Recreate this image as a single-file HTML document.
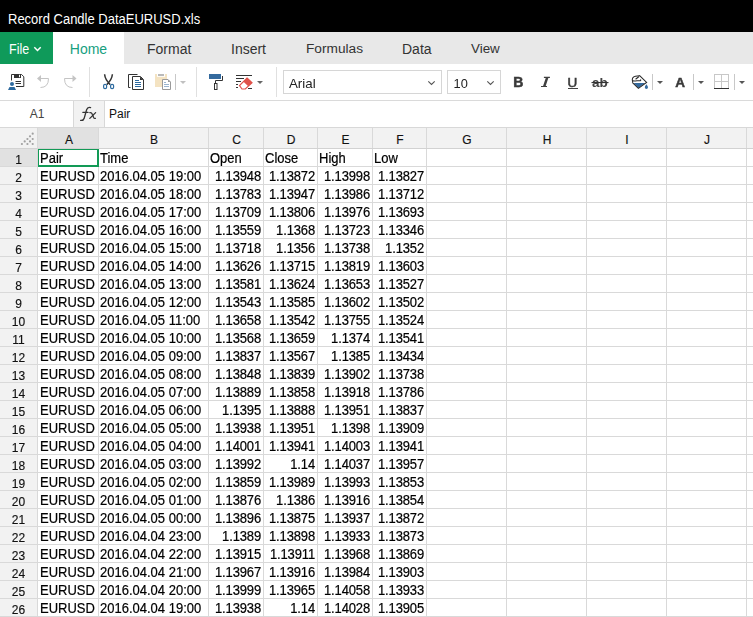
<!DOCTYPE html>
<html><head><meta charset="utf-8">
<style>
*{box-sizing:border-box}
html,body{margin:0;padding:0;width:753px;height:617px;overflow:hidden;background:#fff;font-family:"Liberation Sans",sans-serif}
.abs{position:absolute}
#title{position:absolute;left:0;top:0;width:753px;height:32px;background:#000}
#title span{position:absolute;left:8px;top:11px;color:#fff;font-size:13px;line-height:15px;white-space:nowrap;transform:scaleY(1.1);transform-origin:0 0}
#tabs{position:absolute;left:0;top:32px;width:753px;height:32px;background:#e8e8e8}
.tab{position:absolute;top:0;height:32px;line-height:34px;font-size:14px;color:#333}
#file{left:0;width:53px;background:#0f9a5a;color:#fff;padding-left:9px;font-size:12.5px}
#file span{display:inline-block;transform:scaleY(1.1);transform-origin:0 12px}
#home{left:53px;width:71px;background:#fff;color:#17a07f;text-align:center}
#toolbar{position:absolute;left:0;top:64px;width:753px;height:37px;background:#fff;border-bottom:1px solid #dadada}
#fbar{position:absolute;left:0;top:101px;width:753px;height:27px;background:#fff;border-bottom:1px solid #d8d8d8}
#namebox{position:absolute;left:0;top:0;width:73px;height:26px;line-height:27px;text-align:center;font-size:12px;color:#444;padding-left:1px}
#fx{position:absolute;left:73px;top:0;width:32px;height:26px;background:#f2f2f2;border-left:1px solid #d8d8d8;border-right:1px solid #d8d8d8}
#ftext{position:absolute;left:109px;top:0;line-height:27px;font-size:12px;color:#111}
#grid{position:absolute;left:0;top:0;width:753px;height:617px}
.corner{position:absolute;left:0;top:128px;width:37px;height:20px;background:#f2f2f2}
.ch{position:absolute;top:128px;height:20px;line-height:25px;padding-left:2px;background:#f2f2f2;text-align:center;font-size:12px;color:#111;-webkit-text-stroke:0.15px #111}
.ch.sel{background:#e1e1e1}
.rh{position:absolute;left:0;width:37px;height:18px;line-height:25px;background:#f2f2f2;text-align:center;font-size:12px;color:#111;-webkit-text-stroke:0.15px #111}
.rh.sel{background:#e1e1e1}
.vl{position:absolute;top:128px;width:1px;height:490px;background:#d9d9d9}
.hl{position:absolute;left:0;width:753px;height:1px;background:#d9d9d9}
.c{position:absolute;height:18px;font-size:13px;color:#000;padding:0 2px 0 2px;white-space:nowrap;overflow:hidden}
.c span{display:inline-block;line-height:15px;margin-top:2px;transform:scaleY(1.11);transform-origin:0 0;-webkit-text-stroke:0.2px #000}
.c.r{text-align:right}
#selbox{position:absolute;left:38px;top:149px;width:61px;height:18px;border-style:solid;border-color:#129a56;border-width:1px 2px 2px 1px}
.c.r span{letter-spacing:-0.14px}

</style></head><body>
<div id="title"><span>Record Candle DataEURUSD.xls</span></div>
<div id="tabs">
<div class="tab" id="file"><span>File</span><svg width="9" height="6" style="position:absolute;left:33px;top:13.5px" viewBox="0 0 9 6"><path d="M1.3 1.3 L4.5 4.5 L7.7 1.3" fill="none" stroke="#fff" stroke-width="1.5"/></svg></div>
<div class="tab" id="home">Home</div>
<div class="tab" style="left:147px">Format</div>
<div class="tab" style="left:231px">Insert</div>
<div class="tab" style="left:306px;font-size:13.7px">Formulas</div>
<div class="tab" style="left:402px">Data</div>
<div class="tab" style="left:471px;font-size:13.4px">View</div>
</div>
<div id="toolbar"></div>
<div id="fbar">
<div id="namebox">A1</div>
<div id="fx"></div>
<div id="ftext">Pair</div>
</div>
<svg class="abs" style="left:0;top:0;will-change:transform" width="753" height="128" viewBox="0 0 753 128">
<!-- separators -->
<rect x="89" y="67" width="1" height="30" fill="#e0e0e0"/>
<rect x="196" y="67" width="1" height="30" fill="#e0e0e0"/>
<rect x="276" y="67" width="1" height="30" fill="#e0e0e0"/>
<!-- save -->
<g fill="none" stroke="#333" stroke-width="1">
<path d="M11.5 80.5 V74.5 H21.6 L23.8 76.8 V86.5 H16"/>
<path d="M15.5 81.5 H21 M15.5 83.5 H21"/>
</g>
<rect x="14" y="74" width="7" height="4" fill="#333"/>
<rect x="19" y="74.8" width="1" height="2.4" fill="#fff"/>
<circle cx="12" cy="84" r="2" fill="#2d6a9f"/>
<path d="M9.5 87 H14.5 L16 90 H8 Z" fill="#2d6a9f"/>
<!-- undo/redo -->
<g fill="none" stroke="#c4c4c4" stroke-width="1">
<path d="M40 78.5 H48.5 Q48.5 87.5 40.5 87.5"/>
<path d="M73 78.5 H64.5 Q64.5 87.5 72.5 87.5"/>
</g>
<path d="M37 78.5 L41 75 V82 Z" fill="#c4c4c4"/>
<path d="M76.5 78.5 L72.5 75 V82 Z" fill="#c4c4c4"/>
<!-- cut -->
<path d="M104.6 74.3 Q105 79.5 110.2 84.6 M112.4 74.3 Q112 79.5 106.8 84.6" fill="none" stroke="#333" stroke-width="1.5"/>
<rect x="103.6" y="84.4" width="3" height="4.2" rx="1.4" fill="none" stroke="#2d6a9f" stroke-width="1.2"/>
<rect x="110.6" y="84.4" width="3" height="4.2" rx="1.4" fill="none" stroke="#2d6a9f" stroke-width="1.2"/>
<!-- copy -->
<g fill="none" stroke="#333" stroke-width="1">
<path d="M137.5 74.5 H128.5 V87.5 H130.5"/>
<path d="M132.5 76.5 H140.5 L143.5 79.5 V89.5 H132.5 Z"/>
</g>
<path d="M140 76.5 L143.5 80 H140 Z" fill="#333"/>
<g stroke="#2d6a9f" stroke-width="1">
<path d="M135 80.5 H139 M135 82.5 H141 M135 84.5 H141 M135 86.5 H141"/>
</g>
<!-- paste (disabled) -->
<rect x="155" y="74" width="12" height="13" fill="#f4e3c2"/>
<rect x="157" y="74" width="8" height="2.8" fill="#fff"/>
<rect x="158" y="74.2" width="6" height="1.6" fill="#aaa"/>
<path d="M162.5 79.5 H168 L170.5 82 V89.5 H162.5 Z" fill="#fff" stroke="#9a9a9a" stroke-width="1"/>
<path d="M168 79.5 L170.5 82 H168 Z" fill="#9a9a9a"/>
<path d="M164 82.5 H166 M164 84.5 H169 M164 86.5 H169" stroke="#9bb5cf" stroke-width="1"/>
<rect x="175" y="74" width="1" height="16" fill="#c8c8c8"/>
<path d="M180 81 H186 L183 84 Z" fill="#c0c0c0"/>
<!-- format painter -->
<rect x="209" y="74" width="12" height="5" fill="#346a9e"/>
<path d="M222.5 76 V80.5 H215.5 V83" fill="none" stroke="#333" stroke-width="1"/>
<rect x="214.5" y="83.5" width="2.5" height="6" fill="none" stroke="#333" stroke-width="1"/>
<!-- clear formatting -->
<g stroke="#333" stroke-width="1">
<path d="M236 75.5 H252 M236 78.5 H244 M236 81.5 H241 M236 84.5 H238 M236 87.5 H238 M248 88.5 H252"/>
</g>
<path d="M247 78 L252 82.8 L245.3 89 H242 L239.5 85.5 Z" fill="#fff" stroke="#e0524a" stroke-width="1.2"/>
<path d="M247 78 L252 82.8 L248.3 86.2 L243.2 81.5 Z" fill="#e0524a"/>
<path d="M257 81 H263 L260 84 Z" fill="#666"/>
<!-- font box -->
<rect x="283.5" y="70.5" width="158" height="23" fill="#fff" stroke="#d6d6d6" stroke-width="1"/>
<text x="289" y="88" font-family="Liberation Sans" font-size="13.3" fill="#222">Arial</text>
<path d="M428.3 81.3 L431.5 84.5 L434.7 81.3" fill="none" stroke="#555" stroke-width="1.1"/>
<rect x="447.5" y="70.5" width="53" height="23" fill="#fff" stroke="#d6d6d6" stroke-width="1"/>
<text x="453.6" y="88.4" font-family="Liberation Sans" font-size="12.8" fill="#222">10</text>
<path d="M487.3 81.3 L490.5 84.5 L493.7 81.3" fill="none" stroke="#555" stroke-width="1.1"/>
<!-- B I U ab -->
<text x="513.2" y="87" font-family="Liberation Sans" font-weight="bold" font-size="14" fill="#3a3a3a" stroke="#3a3a3a" stroke-width="0.5">B</text>
<path d="M543.9 76.8 H549.9 V77.9 H543.9 Z M541 86 H547 V87.1 H541 Z M545.9 77.5 L548.5 77.5 L545.5 86.5 L542.9 86.5 Z" fill="#404040"/>
<text x="567.6" y="87" font-family="Liberation Sans" font-size="13.5" fill="#3a3a3a" stroke="#3a3a3a" stroke-width="0.6">U</text>
<rect x="568" y="88" width="10" height="1" fill="#404040"/>
<text x="592" y="87" font-family="Liberation Sans" font-weight="bold" font-size="13.5" fill="#444">ab</text>
<rect x="591.5" y="82" width="17" height="1.1" fill="#333"/>
<!-- fill color -->
<path d="M633.6 82.9 H645.2 L638.4 88 Z" fill="#346a9e"/>
<path d="M639.35 75.3 L646.6 82.4 L638.4 88.4 L632.2 82.4" fill="none" stroke="#2a2a2a" stroke-width="1.1" stroke-linejoin="miter"/>
<g fill="none" stroke="#2a2a2a" stroke-width="1.1" stroke-linecap="round">
<path d="M632.6 81.6 Q631.3 77.2 635.5 76.2 L639.3 75.8"/>
<path d="M635.9 79 L638.7 76.8"/>
<path d="M633.4 80.9 Q634.5 81.1 637 80.8 L640.3 80.8 Q640.9 80.6 640.7 79.8"/>
</g>
<path d="M646.4 84.2 Q648 86.3 648 87.3 A1.6 1.6 0 0 1 644.8 87.3 Q644.8 86.3 646.4 84.2 Z" fill="#346a9e"/>
<rect x="652" y="74" width="1" height="16" fill="#c8c8c8"/>
<path d="M657 81 H663 L660 84 Z" fill="#555"/>
<!-- font color A -->
<text x="675.2" y="87" font-family="Liberation Sans" font-weight="bold" font-size="13.5" fill="#3a3a3a" stroke="#3a3a3a" stroke-width="0.5">A</text>
<rect x="693" y="74" width="1" height="16" fill="#c8c8c8"/>
<path d="M698 81 H704 L701 84 Z" fill="#555"/>
<!-- borders -->
<g fill="none" stroke="#c8c8c8" stroke-width="1">
<rect x="714.5" y="74.5" width="14" height="14"/>
<path d="M721.5 74.5 V88.5 M714.5 81.5 H728.5"/>
</g>
<rect x="714" y="88" width="15" height="1" fill="#333"/>
<rect x="734" y="74" width="1" height="16" fill="#c8c8c8"/>
<path d="M739 81 H745 L742 84 Z" fill="#555"/>
<!-- fx -->
<g fill="none" stroke="#333" stroke-width="1.3" stroke-linecap="round">
<path d="M90.6 107.6 Q87.6 106.8 86.6 109.8 L84.2 118.2 Q83.4 120.8 80.6 120.4"/>
<path d="M82.9 112.4 H88"/>
<path d="M89.9 112.6 Q91.6 112.3 92.3 114.2 L93.6 117.4 Q94.2 118.7 95.4 118.3"/>
<path d="M95.6 112.6 L89.8 118.4"/>
</g>
</svg>

<div id="grid">
<div class="corner"></div>
<svg class="abs" width="38" height="21" style="left:0;top:127px" viewBox="0 127 38 21"><circle cx="32.7" cy="133.7" r="1.1" fill="#a0a0a0"/><circle cx="30" cy="136.3" r="1.1" fill="#a0a0a0"/><circle cx="27.4" cy="139" r="1.1" fill="#a0a0a0"/><circle cx="32.7" cy="139" r="1.1" fill="#a0a0a0"/><circle cx="24.7" cy="141.4" r="1.1" fill="#a0a0a0"/><circle cx="30" cy="141.4" r="1.1" fill="#a0a0a0"/><circle cx="21.9" cy="144" r="1.1" fill="#a0a0a0"/><circle cx="27.4" cy="144" r="1.1" fill="#a0a0a0"/><circle cx="32.7" cy="144" r="1.1" fill="#a0a0a0"/></svg>
<div class="ch sel" style="left:38px;width:60px">A</div>
<div class="ch" style="left:98px;width:110px">B</div>
<div class="ch" style="left:208px;width:55px">C</div>
<div class="ch" style="left:263px;width:54px">D</div>
<div class="ch" style="left:317px;width:55px">E</div>
<div class="ch" style="left:372px;width:54px">F</div>
<div class="ch" style="left:426px;width:80px">G</div>
<div class="ch" style="left:506px;width:80px">H</div>
<div class="ch" style="left:586px;width:80px">I</div>
<div class="ch" style="left:666px;width:80px">J</div>
<div class="ch" style="left:746px;width:80px">K</div>
<div class="rh sel" style="top:148px">1</div>
<div class="rh" style="top:166px">2</div>
<div class="rh" style="top:184px">3</div>
<div class="rh" style="top:202px">4</div>
<div class="rh" style="top:220px">5</div>
<div class="rh" style="top:238px">6</div>
<div class="rh" style="top:256px">7</div>
<div class="rh" style="top:274px">8</div>
<div class="rh" style="top:292px">9</div>
<div class="rh" style="top:310px">10</div>
<div class="rh" style="top:328px">11</div>
<div class="rh" style="top:346px">12</div>
<div class="rh" style="top:364px">13</div>
<div class="rh" style="top:382px">14</div>
<div class="rh" style="top:400px">15</div>
<div class="rh" style="top:418px">16</div>
<div class="rh" style="top:436px">17</div>
<div class="rh" style="top:454px">18</div>
<div class="rh" style="top:472px">19</div>
<div class="rh" style="top:490px">20</div>
<div class="rh" style="top:508px">21</div>
<div class="rh" style="top:526px">22</div>
<div class="rh" style="top:544px">23</div>
<div class="rh" style="top:562px">24</div>
<div class="rh" style="top:580px">25</div>
<div class="rh" style="top:598px">26</div>
<div class="vl" style="left:98px"></div>
<div class="vl" style="left:208px"></div>
<div class="vl" style="left:263px"></div>
<div class="vl" style="left:317px"></div>
<div class="vl" style="left:372px"></div>
<div class="vl" style="left:426px"></div>
<div class="vl" style="left:506px"></div>
<div class="vl" style="left:586px"></div>
<div class="vl" style="left:666px"></div>
<div class="vl" style="left:746px"></div>
<div class="vl" style="left:826px"></div>
<div class="hl" style="top:148px;background:#d2d2d2"></div>
<div class="hl" style="top:166px"></div>
<div class="hl" style="top:184px"></div>
<div class="hl" style="top:202px"></div>
<div class="hl" style="top:220px"></div>
<div class="hl" style="top:238px"></div>
<div class="hl" style="top:256px"></div>
<div class="hl" style="top:274px"></div>
<div class="hl" style="top:292px"></div>
<div class="hl" style="top:310px"></div>
<div class="hl" style="top:328px"></div>
<div class="hl" style="top:346px"></div>
<div class="hl" style="top:364px"></div>
<div class="hl" style="top:382px"></div>
<div class="hl" style="top:400px"></div>
<div class="hl" style="top:418px"></div>
<div class="hl" style="top:436px"></div>
<div class="hl" style="top:454px"></div>
<div class="hl" style="top:472px"></div>
<div class="hl" style="top:490px"></div>
<div class="hl" style="top:508px"></div>
<div class="hl" style="top:526px"></div>
<div class="hl" style="top:544px"></div>
<div class="hl" style="top:562px"></div>
<div class="hl" style="top:580px"></div>
<div class="hl" style="top:598px"></div>
<div class="hl" style="top:616px"></div>
<div class="vl" style="left:37px"></div>
<div class="c" style="top:148px;left:38px;width:60px"><span>Pair</span></div>
<div class="c" style="top:148px;left:98px;width:110px"><span>Time</span></div>
<div class="c" style="top:148px;left:208px;width:55px"><span>Open</span></div>
<div class="c" style="top:148px;left:263px;width:54px"><span>Close</span></div>
<div class="c" style="top:148px;left:317px;width:55px"><span>High</span></div>
<div class="c" style="top:148px;left:372px;width:54px"><span>Low</span></div>
<div class="c" style="top:166px;left:38px;width:60px"><span>EURUSD</span></div>
<div class="c" style="top:166px;left:98px;width:110px"><span>2016.04.05 19:00</span></div>
<div class="c r" style="top:166px;left:208px;width:55px"><span>1.13948</span></div>
<div class="c r" style="top:166px;left:263px;width:54px"><span>1.13872</span></div>
<div class="c r" style="top:166px;left:317px;width:55px"><span>1.13998</span></div>
<div class="c r" style="top:166px;left:372px;width:54px"><span>1.13827</span></div>
<div class="c" style="top:184px;left:38px;width:60px"><span>EURUSD</span></div>
<div class="c" style="top:184px;left:98px;width:110px"><span>2016.04.05 18:00</span></div>
<div class="c r" style="top:184px;left:208px;width:55px"><span>1.13783</span></div>
<div class="c r" style="top:184px;left:263px;width:54px"><span>1.13947</span></div>
<div class="c r" style="top:184px;left:317px;width:55px"><span>1.13986</span></div>
<div class="c r" style="top:184px;left:372px;width:54px"><span>1.13712</span></div>
<div class="c" style="top:202px;left:38px;width:60px"><span>EURUSD</span></div>
<div class="c" style="top:202px;left:98px;width:110px"><span>2016.04.05 17:00</span></div>
<div class="c r" style="top:202px;left:208px;width:55px"><span>1.13709</span></div>
<div class="c r" style="top:202px;left:263px;width:54px"><span>1.13806</span></div>
<div class="c r" style="top:202px;left:317px;width:55px"><span>1.13976</span></div>
<div class="c r" style="top:202px;left:372px;width:54px"><span>1.13693</span></div>
<div class="c" style="top:220px;left:38px;width:60px"><span>EURUSD</span></div>
<div class="c" style="top:220px;left:98px;width:110px"><span>2016.04.05 16:00</span></div>
<div class="c r" style="top:220px;left:208px;width:55px"><span>1.13559</span></div>
<div class="c r" style="top:220px;left:263px;width:54px"><span>1.1368</span></div>
<div class="c r" style="top:220px;left:317px;width:55px"><span>1.13723</span></div>
<div class="c r" style="top:220px;left:372px;width:54px"><span>1.13346</span></div>
<div class="c" style="top:238px;left:38px;width:60px"><span>EURUSD</span></div>
<div class="c" style="top:238px;left:98px;width:110px"><span>2016.04.05 15:00</span></div>
<div class="c r" style="top:238px;left:208px;width:55px"><span>1.13718</span></div>
<div class="c r" style="top:238px;left:263px;width:54px"><span>1.1356</span></div>
<div class="c r" style="top:238px;left:317px;width:55px"><span>1.13738</span></div>
<div class="c r" style="top:238px;left:372px;width:54px"><span>1.1352</span></div>
<div class="c" style="top:256px;left:38px;width:60px"><span>EURUSD</span></div>
<div class="c" style="top:256px;left:98px;width:110px"><span>2016.04.05 14:00</span></div>
<div class="c r" style="top:256px;left:208px;width:55px"><span>1.13626</span></div>
<div class="c r" style="top:256px;left:263px;width:54px"><span>1.13715</span></div>
<div class="c r" style="top:256px;left:317px;width:55px"><span>1.13819</span></div>
<div class="c r" style="top:256px;left:372px;width:54px"><span>1.13603</span></div>
<div class="c" style="top:274px;left:38px;width:60px"><span>EURUSD</span></div>
<div class="c" style="top:274px;left:98px;width:110px"><span>2016.04.05 13:00</span></div>
<div class="c r" style="top:274px;left:208px;width:55px"><span>1.13581</span></div>
<div class="c r" style="top:274px;left:263px;width:54px"><span>1.13624</span></div>
<div class="c r" style="top:274px;left:317px;width:55px"><span>1.13653</span></div>
<div class="c r" style="top:274px;left:372px;width:54px"><span>1.13527</span></div>
<div class="c" style="top:292px;left:38px;width:60px"><span>EURUSD</span></div>
<div class="c" style="top:292px;left:98px;width:110px"><span>2016.04.05 12:00</span></div>
<div class="c r" style="top:292px;left:208px;width:55px"><span>1.13543</span></div>
<div class="c r" style="top:292px;left:263px;width:54px"><span>1.13585</span></div>
<div class="c r" style="top:292px;left:317px;width:55px"><span>1.13602</span></div>
<div class="c r" style="top:292px;left:372px;width:54px"><span>1.13502</span></div>
<div class="c" style="top:310px;left:38px;width:60px"><span>EURUSD</span></div>
<div class="c" style="top:310px;left:98px;width:110px"><span>2016.04.05 11:00</span></div>
<div class="c r" style="top:310px;left:208px;width:55px"><span>1.13658</span></div>
<div class="c r" style="top:310px;left:263px;width:54px"><span>1.13542</span></div>
<div class="c r" style="top:310px;left:317px;width:55px"><span>1.13755</span></div>
<div class="c r" style="top:310px;left:372px;width:54px"><span>1.13524</span></div>
<div class="c" style="top:328px;left:38px;width:60px"><span>EURUSD</span></div>
<div class="c" style="top:328px;left:98px;width:110px"><span>2016.04.05 10:00</span></div>
<div class="c r" style="top:328px;left:208px;width:55px"><span>1.13568</span></div>
<div class="c r" style="top:328px;left:263px;width:54px"><span>1.13659</span></div>
<div class="c r" style="top:328px;left:317px;width:55px"><span>1.1374</span></div>
<div class="c r" style="top:328px;left:372px;width:54px"><span>1.13541</span></div>
<div class="c" style="top:346px;left:38px;width:60px"><span>EURUSD</span></div>
<div class="c" style="top:346px;left:98px;width:110px"><span>2016.04.05 09:00</span></div>
<div class="c r" style="top:346px;left:208px;width:55px"><span>1.13837</span></div>
<div class="c r" style="top:346px;left:263px;width:54px"><span>1.13567</span></div>
<div class="c r" style="top:346px;left:317px;width:55px"><span>1.1385</span></div>
<div class="c r" style="top:346px;left:372px;width:54px"><span>1.13434</span></div>
<div class="c" style="top:364px;left:38px;width:60px"><span>EURUSD</span></div>
<div class="c" style="top:364px;left:98px;width:110px"><span>2016.04.05 08:00</span></div>
<div class="c r" style="top:364px;left:208px;width:55px"><span>1.13848</span></div>
<div class="c r" style="top:364px;left:263px;width:54px"><span>1.13839</span></div>
<div class="c r" style="top:364px;left:317px;width:55px"><span>1.13902</span></div>
<div class="c r" style="top:364px;left:372px;width:54px"><span>1.13738</span></div>
<div class="c" style="top:382px;left:38px;width:60px"><span>EURUSD</span></div>
<div class="c" style="top:382px;left:98px;width:110px"><span>2016.04.05 07:00</span></div>
<div class="c r" style="top:382px;left:208px;width:55px"><span>1.13889</span></div>
<div class="c r" style="top:382px;left:263px;width:54px"><span>1.13858</span></div>
<div class="c r" style="top:382px;left:317px;width:55px"><span>1.13918</span></div>
<div class="c r" style="top:382px;left:372px;width:54px"><span>1.13786</span></div>
<div class="c" style="top:400px;left:38px;width:60px"><span>EURUSD</span></div>
<div class="c" style="top:400px;left:98px;width:110px"><span>2016.04.05 06:00</span></div>
<div class="c r" style="top:400px;left:208px;width:55px"><span>1.1395</span></div>
<div class="c r" style="top:400px;left:263px;width:54px"><span>1.13888</span></div>
<div class="c r" style="top:400px;left:317px;width:55px"><span>1.13951</span></div>
<div class="c r" style="top:400px;left:372px;width:54px"><span>1.13837</span></div>
<div class="c" style="top:418px;left:38px;width:60px"><span>EURUSD</span></div>
<div class="c" style="top:418px;left:98px;width:110px"><span>2016.04.05 05:00</span></div>
<div class="c r" style="top:418px;left:208px;width:55px"><span>1.13938</span></div>
<div class="c r" style="top:418px;left:263px;width:54px"><span>1.13951</span></div>
<div class="c r" style="top:418px;left:317px;width:55px"><span>1.1398</span></div>
<div class="c r" style="top:418px;left:372px;width:54px"><span>1.13909</span></div>
<div class="c" style="top:436px;left:38px;width:60px"><span>EURUSD</span></div>
<div class="c" style="top:436px;left:98px;width:110px"><span>2016.04.05 04:00</span></div>
<div class="c r" style="top:436px;left:208px;width:55px"><span>1.14001</span></div>
<div class="c r" style="top:436px;left:263px;width:54px"><span>1.13941</span></div>
<div class="c r" style="top:436px;left:317px;width:55px"><span>1.14003</span></div>
<div class="c r" style="top:436px;left:372px;width:54px"><span>1.13941</span></div>
<div class="c" style="top:454px;left:38px;width:60px"><span>EURUSD</span></div>
<div class="c" style="top:454px;left:98px;width:110px"><span>2016.04.05 03:00</span></div>
<div class="c r" style="top:454px;left:208px;width:55px"><span>1.13992</span></div>
<div class="c r" style="top:454px;left:263px;width:54px"><span>1.14</span></div>
<div class="c r" style="top:454px;left:317px;width:55px"><span>1.14037</span></div>
<div class="c r" style="top:454px;left:372px;width:54px"><span>1.13957</span></div>
<div class="c" style="top:472px;left:38px;width:60px"><span>EURUSD</span></div>
<div class="c" style="top:472px;left:98px;width:110px"><span>2016.04.05 02:00</span></div>
<div class="c r" style="top:472px;left:208px;width:55px"><span>1.13859</span></div>
<div class="c r" style="top:472px;left:263px;width:54px"><span>1.13989</span></div>
<div class="c r" style="top:472px;left:317px;width:55px"><span>1.13993</span></div>
<div class="c r" style="top:472px;left:372px;width:54px"><span>1.13853</span></div>
<div class="c" style="top:490px;left:38px;width:60px"><span>EURUSD</span></div>
<div class="c" style="top:490px;left:98px;width:110px"><span>2016.04.05 01:00</span></div>
<div class="c r" style="top:490px;left:208px;width:55px"><span>1.13876</span></div>
<div class="c r" style="top:490px;left:263px;width:54px"><span>1.1386</span></div>
<div class="c r" style="top:490px;left:317px;width:55px"><span>1.13916</span></div>
<div class="c r" style="top:490px;left:372px;width:54px"><span>1.13854</span></div>
<div class="c" style="top:508px;left:38px;width:60px"><span>EURUSD</span></div>
<div class="c" style="top:508px;left:98px;width:110px"><span>2016.04.05 00:00</span></div>
<div class="c r" style="top:508px;left:208px;width:55px"><span>1.13896</span></div>
<div class="c r" style="top:508px;left:263px;width:54px"><span>1.13875</span></div>
<div class="c r" style="top:508px;left:317px;width:55px"><span>1.13937</span></div>
<div class="c r" style="top:508px;left:372px;width:54px"><span>1.13872</span></div>
<div class="c" style="top:526px;left:38px;width:60px"><span>EURUSD</span></div>
<div class="c" style="top:526px;left:98px;width:110px"><span>2016.04.04 23:00</span></div>
<div class="c r" style="top:526px;left:208px;width:55px"><span>1.1389</span></div>
<div class="c r" style="top:526px;left:263px;width:54px"><span>1.13898</span></div>
<div class="c r" style="top:526px;left:317px;width:55px"><span>1.13933</span></div>
<div class="c r" style="top:526px;left:372px;width:54px"><span>1.13873</span></div>
<div class="c" style="top:544px;left:38px;width:60px"><span>EURUSD</span></div>
<div class="c" style="top:544px;left:98px;width:110px"><span>2016.04.04 22:00</span></div>
<div class="c r" style="top:544px;left:208px;width:55px"><span>1.13915</span></div>
<div class="c r" style="top:544px;left:263px;width:54px"><span>1.13911</span></div>
<div class="c r" style="top:544px;left:317px;width:55px"><span>1.13968</span></div>
<div class="c r" style="top:544px;left:372px;width:54px"><span>1.13869</span></div>
<div class="c" style="top:562px;left:38px;width:60px"><span>EURUSD</span></div>
<div class="c" style="top:562px;left:98px;width:110px"><span>2016.04.04 21:00</span></div>
<div class="c r" style="top:562px;left:208px;width:55px"><span>1.13967</span></div>
<div class="c r" style="top:562px;left:263px;width:54px"><span>1.13916</span></div>
<div class="c r" style="top:562px;left:317px;width:55px"><span>1.13984</span></div>
<div class="c r" style="top:562px;left:372px;width:54px"><span>1.13903</span></div>
<div class="c" style="top:580px;left:38px;width:60px"><span>EURUSD</span></div>
<div class="c" style="top:580px;left:98px;width:110px"><span>2016.04.04 20:00</span></div>
<div class="c r" style="top:580px;left:208px;width:55px"><span>1.13999</span></div>
<div class="c r" style="top:580px;left:263px;width:54px"><span>1.13965</span></div>
<div class="c r" style="top:580px;left:317px;width:55px"><span>1.14058</span></div>
<div class="c r" style="top:580px;left:372px;width:54px"><span>1.13933</span></div>
<div class="c" style="top:598px;left:38px;width:60px"><span>EURUSD</span></div>
<div class="c" style="top:598px;left:98px;width:110px"><span>2016.04.04 19:00</span></div>
<div class="c r" style="top:598px;left:208px;width:55px"><span>1.13938</span></div>
<div class="c r" style="top:598px;left:263px;width:54px"><span>1.14</span></div>
<div class="c r" style="top:598px;left:317px;width:55px"><span>1.14028</span></div>
<div class="c r" style="top:598px;left:372px;width:54px"><span>1.13905</span></div>
<div id="selbox"></div>
</div>
</body></html>
